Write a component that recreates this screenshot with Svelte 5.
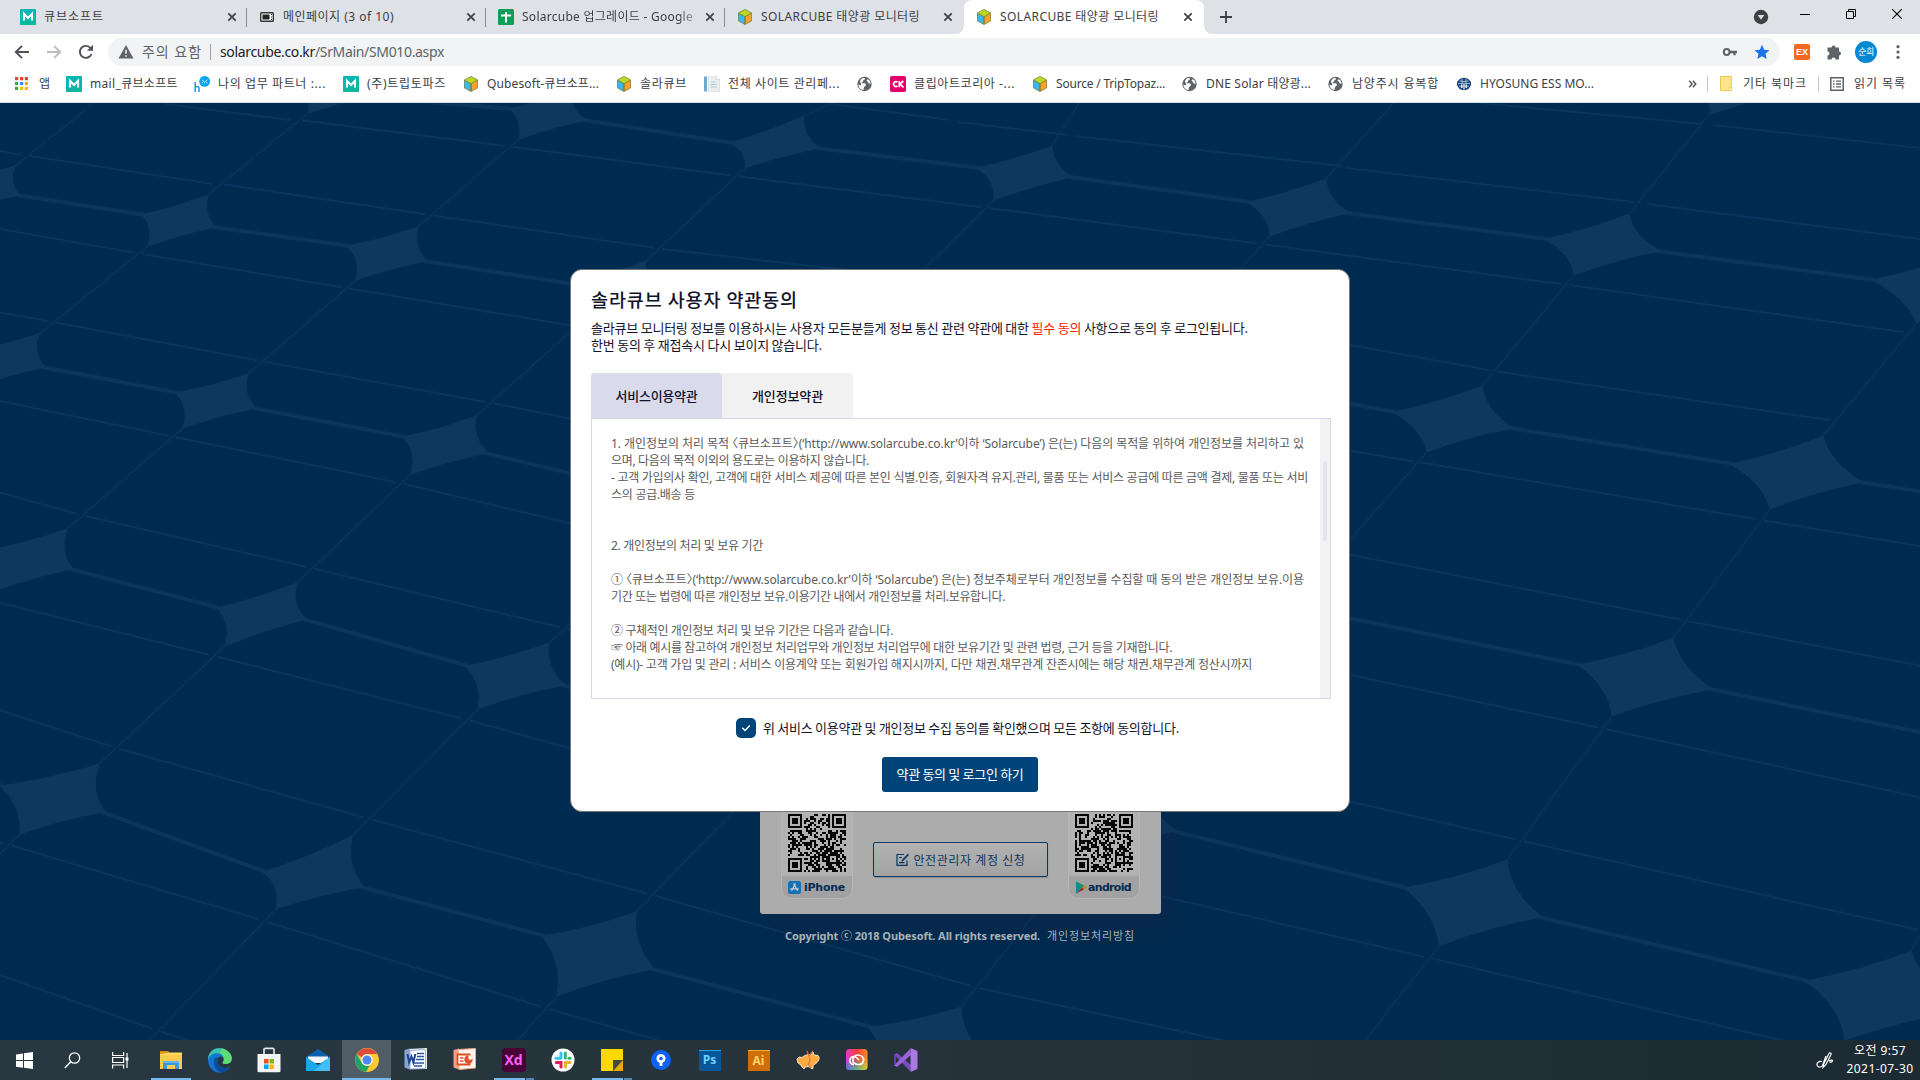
<script>
  // Tightens or loosens letter spacing so a single line fills a given width.
  function fit(node, width) {
    const natural = node.getBoundingClientRect().width;
    const count = [...node.textContent].length;
    if (width && count) node.style.letterSpacing = (width - natural) / count + 'px';
  }

  const tabs = [
    { icon: 'm', title: '큐브소프트', w: 60 },
    { icon: 'screen', title: '메인페이지 (3 of 10)', w: 111 },
    { icon: 'sheet', title: 'Solarcube 업그레이드 - Google', w: 171, fade: true },
    { icon: 'cube', title: 'SOLARCUBE 태양광 모니터링', w: 159 },
    { icon: 'cube', title: 'SOLARCUBE 태양광 모니터링', w: 159, active: true }
  ];

  const bookmarks = [
    { icon: 'm', title: 'mail_큐브소프트', w: 88 },
    { icon: 'hmail', title: '나의 업무 파트너 :...', w: 108 },
    { icon: 'm', title: '(주)트립토파즈', w: 79 },
    { icon: 'cube', title: 'Qubesoft-큐브소프...', w: 112 },
    { icon: 'cube', title: '솔라큐브', w: 47 },
    { icon: 'page', title: '전체 사이트 관리페...', w: 112 },
    { icon: 'globe', title: '', w: 0 },
    { icon: 'ck', title: '클립아트코리아 -...', w: 101 },
    { icon: 'cube', title: 'Source / TripTopaz...', w: 109 },
    { icon: 'globe', title: 'DNE Solar 태양광...', w: 105 },
    { icon: 'globe', title: '남양주시 융복합', w: 87 },
    { icon: 'hyosung', title: 'HYOSUNG ESS MO...', w: 114 }
  ];

  const terms = [
    ['1. 개인정보의 처리 목적 〈큐브소프트〉(‘http://www.solarcube.co.kr’이하 ‘Solarcube’) 은(는) 다음의 목적을 위하여 개인정보를 처리하고 있', 693],
    ['으며, 다음의 목적 이외의 용도로는 이용하지 않습니다.', 258],
    ['- 고객 가입의사 확인, 고객에 대한 서비스 제공에 따른 본인 식별.인증, 회원자격 유지.관리, 물품 또는 서비스 공급에 따른 금액 결제, 물품 또는 서비', 697],
    ['스의 공급.배송 등', 84],
    ['', 0],
    ['', 0],
    ['2. 개인정보의 처리 및 보유 기간', 152],
    ['', 0],
    ['① 〈큐브소프트〉(‘http://www.solarcube.co.kr’이하 ‘Solarcube’) 은(는) 정보주체로부터 개인정보를 수집할 때 동의 받은 개인정보 보유.이용', 693],
    ['기간 또는 법령에 따른 개인정보 보유.이용기간 내에서 개인정보를 처리.보유합니다.', 394],
    ['', 0],
    ['② 구체적인 개인정보 처리 및 보유 기간은 다음과 같습니다.', 282],
    ['☞ 아래 예시를 참고하여 개인정보 처리업무와 개인정보 처리업무에 대한 보유기간 및 관련 법령, 근거 등을 기재합니다.', 561],
    ['(예시)- 고객 가입 및 관리 : 서비스 이용계약 또는 회원가입 해지시까지, 다만 채권.채무관계 잔존시에는 해당 채권.채무관계 정산시까지', 641]
  ];

  const apps = [
    { icon: 'explorer', run: 1 }, { icon: 'edge' }, { icon: 'store' }, { icon: 'mail' },
    { icon: 'chrome', active: true }, { icon: 'word' }, { icon: 'ppt' }, { icon: 'xd', run: 2 },
    { icon: 'slack' }, { icon: 'notes', run: 2 }, { icon: 'sourcetree' }, { icon: 'ps' },
    { icon: 'ai' }, { icon: 'pig' }, { icon: 'cc' }, { icon: 'vs' }
  ];

  // Panel joints, row by row: left, top, right, bottom tips and the top tip of the joint below.
  const rows = [
    [
      [300, 92, 355, 78, 370, 97, 308, 113, 208, 195],
      [510, 109, 570, 90, 586, 120, 519, 139, 418, 227],
      [730, 143, 804, 116, 820, 148, 745, 168, 646, 261],
      [977, 168, 1052, 146, 1073, 177, 994, 200, 903, 290],
      [1247, 202, 1326, 179, 1350, 213, 1270, 236, 1185, 330],
      [1545, 239, 1629, 214, 1660, 251, 1574, 275, 1482, 386],
      [1872, 280, 1960, 254, 1995, 295, 1917, 323, 1823, 436]
    ],
    [
      [-55, 182, 15, 166, 20, 195, -45, 212, -150, 300],
      [142, 215, 208, 195, 216, 227, 148, 246, 39, 334],
      [347, 246, 418, 227, 427, 261, 356, 280, 248, 374],
      [570, 284, 646, 261, 658, 298, 586, 318, 476, 416],
      [815, 322, 903, 290, 922, 334, 840, 360, 735, 470],
      [1085, 362, 1185, 330, 1210, 378, 1110, 400, 1025, 525],
      [1393, 412, 1482, 386, 1513, 428, 1427, 452, 1325, 568],
      [1730, 464, 1823, 436, 1863, 482, 1770, 509, 1673, 638],
      [2110, 522, 2210, 490, 2250, 540, 2150, 570, 2040, 710]
    ],
    [
      [-35, 352, 39, 334, 45, 367, -25, 387, -140, 470],
      [176, 393, 248, 374, 256, 408, 183, 428, 67, 529],
      [403, 437, 476, 416, 488, 453, 411, 474, 297, 583],
      [650, 493, 735, 470, 750, 515, 668, 535, 549, 643],
      [930, 553, 1025, 525, 1045, 570, 952, 597, 835, 705],
      [1235, 600, 1325, 568, 1346, 617, 1250, 640, 1140, 775],
      [1578, 665, 1673, 638, 1713, 689, 1612, 716, 1507, 860],
      [1960, 741, 2060, 710, 2100, 765, 2000, 800, 1911, 951]
    ],
    [
      [-20, 552, 67, 529, 73, 569, -5, 591, -120, 690],
      [217, 608, 297, 583, 306, 619, 225, 646, 99, 764],
      [465, 666, 549, 643, 565, 685, 478, 709, 352, 836],
      [740, 735, 835, 705, 852, 755, 757, 787, 636, 912],
      [1050, 805, 1140, 775, 1176, 831, 1076, 862, 961, 1007],
      [1404, 888, 1507, 860, 1542, 917, 1439, 946, 1330, 1085],
      [1805, 981, 1911, 951, 1965, 1010, 1845, 1040, 1740, 1190]
    ],
    [
      [-250, 730, -160, 700, -150, 740, -240, 770, -380, 900],
      [0, 786, 99, 764, 105, 812, 20, 834, -110, 960],
      [263, 872, 352, 836, 364, 887, 276, 909, 140, 1050],
      [542, 936, 636, 912, 655, 969, 557, 996, 430, 1140],
      [868, 1027, 961, 1007, 990, 1060, 885, 1090, 770, 1230],
      [1220, 1120, 1330, 1085, 1360, 1150, 1250, 1170, 1130, 1320]
    ]
  ];

  // Point at fraction t of the diagonal that leaves a joint's bottom tip.
  const along = (s, t) => [s[6] + (s[8] - s[6]) * t + 3, s[7] + (s[9] - s[7]) * t];
  const q = (ax, ay, bx, by, cx, cy, k) => {
    const mx = (ax + bx) / 2, my = (ay + by) / 2;
    return `Q${mx + (cx - mx) * k} ${my + (cy - my) * k} ${bx} ${by}`;
  };
  const starPath = ([lx, ly, tx, ty, rx, ry, bx, by]) => {
    const cx = (lx + tx + rx + bx) / 4, cy = (ly + ty + ry + by) / 4;
    return `M${lx} ${ly}` + q(lx, ly, tx, ty, cx, cy, 0.16) + q(tx, ty, rx, ry, cx, cy, 0.28) +
      q(rx, ry, bx, by, cx, cy, 0.16) + q(bx, by, lx, ly, cx, cy, 0.28) + 'Z';
  };
  const links = [[375, 97, 513, 109]];
  const diagonals = [
    [98, 100, 15, 166], [840, 100, 804, 116], [1081, 100, 1052, 146],
    [1396, 100, 1326, 179], [1710, 113, 1629, 214]
  ];
  const seams = [
    [0, 151, 22, 155], [30, 156, 213, 184], [165, 104, 290, 120], [830, 104, 950, 120],
    [958, 122, 1068, 135], [1075, 136, 1342, 166], [1346, 168, 1634, 202],
    [1647, 204, 1920, 239], [1713, 125, 1920, 148], [1480, 103, 1702, 124]
  ];
  const seam = (a, b) => {
    const len = Math.hypot(b[0] - a[0], b[1] - a[1]);
    const t = (len - 8) / len;
    seams.push([a[0], a[1], a[0] + (b[0] - a[0]) * t, a[1] + (b[1] - a[1]) * t]);
  };
  for (const row of rows) {
    row.forEach((s, i) => {
      diagonals.push([s[6], s[7], s[8], s[9]]);
      const n = row[i + 1];
      if (!n) return;
      links.push([s[4] - 3, s[5], n[0] + 3, n[1]]);
      seam(along(s, 0.09), along(n, 0.09));
      seam(along(s, 0.87), along(n, 0.87));
    });
  }

  // Square matrix with three corner finders and a scattered data area.
  function matrix(seed) {
    const n = 29;
    let s = seed;
    const cells = [];
    const finder = (x, y) => {
      const d = Math.max(Math.abs(x - 3), Math.abs(y - 3));
      return d === 3 || d <= 1;
    };
    for (let y = 0; y < n; y++)
      for (let x = 0; x < n; x++) {
        s = (s * 1103515245 + 12345) % 2147483648;
        let on = (s >> 12) % 100 < 52;
        if (x < 8 && y < 8) on = x < 7 && y < 7 && finder(x, y);
        else if (x > 20 && y < 8) on = x > 21 && y < 7 && finder(x - 22, y);
        else if (x < 8 && y > 20) on = x < 7 && y > 21 && finder(x, y - 22);
        else if (x > 19 && x < 25 && y > 19 && y < 25) {
          const d = Math.max(Math.abs(x - 22), Math.abs(y - 22));
          on = d !== 1;
        }
        if (on) cells.push(`M${x} ${y}h1v1h-1z`);
      }
    return cells.join('');
  }
  const stores = [
    { name: 'iPhone', icon: 'appstore', w: 41, code: matrix(77) },
    { name: 'android', icon: 'play', w: 43, code: matrix(4211) }
  ];
</script>

{#snippet icon(name)}
  {#if name === 'm'}
    <svg class="i16" viewBox="0 0 16 16"><rect width="16" height="16" rx="1" fill="#0bb5b3" /><path d="M0 15L16 5v11H0z" fill="#12b886" opacity=".55" /><path d="M4 11.500V4.800l4 4.200 4-4.200v6.700" fill="none" stroke="#fff" stroke-width="2.100" /></svg>
  {:else if name === 'screen'}
    <svg class="i16" viewBox="0 0 16 16"><rect x="1.700" y="3.700" width="12.600" height="8.600" rx=".8" fill="#fff" stroke="#333" stroke-width="1.400" /><rect x="3.500" y="5.500" width="7" height="5" fill="#222" /><path d="M12 5.500h1M12 8h1M12 10.300h1" stroke="#222" /></svg>
  {:else if name === 'sheet'}
    <svg class="i16" viewBox="0 0 16 16"><rect width="16" height="16" rx="1.500" fill="#0f9d58" /><path d="M8 3v10.500M3 6.500h10" stroke="#fff" stroke-width="2" /></svg>
  {:else if name === 'cube'}
    <svg class="i16" viewBox="0 0 16 16"><path d="M8 0l7 3.700v8.400L8 16l-7-3.900V3.700z" fill="#7a8b3a" /><path d="M8 .8l6 3.200-6 3.200L2 4z" fill="#bfd526" /><path d="M1.600 4.700l5.900 3.200v7L1.600 11.600z" fill="#39b9ea" /><path d="M14.400 4.700L8.500 7.900v7l5.900-3.300z" fill="#f9a12e" /><path d="M8 7.600V15" stroke="#806b40" stroke-width=".8" /></svg>
  {:else if name === 'hmail'}
    <svg class="i16" viewBox="0 0 16 16"><circle cx="10.600" cy="5.400" r="5.400" fill="#03a5ee" /><path d="M7.800 3.600l2.800 2.500 2.800-2.500M7.800 7.300l1.600-1.400M13.400 7.300l-1.600-1.400" fill="none" stroke="#d5f1fd" stroke-width=".9" /><path d="M1.200 6v10M1.200 12.300c0-2 3.800-2.600 3.800 0V16" fill="none" stroke="#1a9de0" stroke-width="1.500" /></svg>
  {:else if name === 'page'}
    <svg class="i16" viewBox="0 0 16 16"><path d="M0 .5h3v15H0z" fill="#6ea8cf" /><path d="M4.500 0h7.500l3.500 3v13h-11z" fill="#eceff1" stroke="#d3d8dc" stroke-width=".7" /><path d="M7 6h5M7 8.500h6M7 11h6" stroke="#b6c6d1" /><path d="M12 0v3.500h3.500" fill="#fafafa" stroke="#c4c8cb" stroke-width=".6" /></svg>
  {:else if name === 'globe'}
    <svg class="i16" viewBox="0 0 16 16"><circle cx="7.500" cy="8" r="7.200" fill="#5f6368" /><path d="M6.300 1.800c2.500.2 2 1.600.5 2.200-1.200.5-.2 1.700-1.600 2.200-1 .4-.6 1.200.8 1.100 2-.2 3.200.4 2.900 1.800-.3 1.200-1.700 1-1.900 2.500l-.6 2.500C3.500 13.800 1.500 11.500 1.400 8.400L4.100 9.500C4.800 7.600 3 6.500 3 5.200 3.700 3.400 4.900 2.200 6.300 1.800zM10.800 3.200c-1.400.7-1.600 1.800-.4 2.300 1.400.5.200 1.800 2.300 2.200 1.100.2.900-.8.800-1.300-.4-1.500-1.300-2.600-2.700-3.200z" fill="#fff" /></svg>
  {:else if name === 'ck'}
    <svg class="i16" viewBox="0 0 16 16"><rect width="16" height="16" rx="1.800" fill="#e5006d" /><path d="M7.500 6.200A2.400 2.400 0 1 0 7.500 9.900M9.300 5v6.200M13.400 5L10 8.100l3.600 3.200" fill="none" stroke="#fff" stroke-width="1.700" /></svg>
  {:else if name === 'hyosung'}
    <svg class="i16" viewBox="0 0 16 16"><ellipse cx="8" cy="8" rx="7" ry="6.200" fill="#1c4678" /><path d="M2 7.600h12M3.500 4.800c3 1 6 1 9 0M3 10.300h10M6 2.700v5M10 2.700v5" stroke="#a9c5df" stroke-width=".9" fill="none" /><path d="M5 8.500h1.500v3.500H5zM9.500 8.500H11V12H9.500zM7.400 8h1.200v5.500H7.400z" fill="#e9f1f8" /></svg>
  {:else if name === 'appstore'}
    <svg class="i13" viewBox="0 0 13 13"><rect width="13" height="13" rx="2.500" fill="#1272b4" /><path d="M7.500 2.500L3.500 9.800M5.600 2.500l4 7.300M2.200 7.900h8.600" stroke="#c5ced4" stroke-width="1.300" fill="none" /></svg>
  {:else if name === 'play'}
    <svg class="i13" viewBox="0 0 13 13"><path d="M1 .3v12.400l6-6.200z" fill="#128a91" /><path d="M1 .3l8 4.200-2 2z" fill="#16905a" /><path d="M9 4.500l3.300 2L9 8.500l-2-2z" fill="#b0921d" /><path d="M1 12.700l6-6.200 2 2z" fill="#a52d35" /></svg>
  {:else if name === 'explorer'}
    <svg class="i26" viewBox="0 0 26 26"><path d="M2 4h8l2 2v3H2z" fill="#d9930e" /><path d="M2 7l10-1.500h12V21H2z" fill="#ffd768" /><path d="M2 8h22v14H2z" fill="#fbcb4e" /><path d="M5 14h16v8h-4v-4H9v4H5z" fill="#3a98dc" /><path d="M5 14h16v2H5z" fill="#5eb5ef" /></svg>
  {:else if name === 'edge'}
    <svg class="i26" viewBox="0 0 24 24"><path d="M1 13C0 4 8-1 15 1.500 22 4 25 10 21.500 14c-2 2-6 2-7 .8-.8-1 1.300-1.300.8-4C14.500 7 8 4.500 1 13z" fill="#37c2b3" /><path d="M14 1.200C21 3 25 10 21.500 14c-2 2-6 2-7 .8 2.500-3 1.500-7-3-9z" fill="#5bdd74" /><path d="M1 12C3 5 12 4 15 9c-5-1-6 3-5 6 1.200 4 6 6 11 3.200C18 24 9 26 4 20c-2-2-3-5-3-8z" fill="#1275cf" /><path d="M7.500 10c-3 5 0 12 5.500 13.500 3.300.2 6.500-2.300 8-5.300-5 2.500-10 .5-11-3.500-.5-2-.5-3.500 1-5z" fill="#0b4c9a" /></svg>
  {:else if name === 'store'}
    <svg class="i26" viewBox="0 0 26 26"><path d="M8 9V2.500c0-.8.500-1.200 1.200-1.200h7.600c.7 0 1.200.4 1.200 1.200V9" fill="none" stroke="#dfe3e5" stroke-width="1.700" /><path d="M1.500 7h23v17c0 .8-.5 1.200-1.200 1.200H2.700c-.7 0-1.200-.4-1.200-1.200z" fill="#f4f4f4" /><path d="M8 12h4.500v4.500H8z" fill="#f25022" /><path d="M13.500 12H18v4.500h-4.500z" fill="#7fba00" /><path d="M8 17.500h4.500V22H8z" fill="#00a4ef" /><path d="M13.500 17.500H18V22h-4.500z" fill="#ffb900" /></svg>
  {:else if name === 'mail'}
    <svg class="i26" viewBox="0 0 26 26"><path d="M1 10L13 2l12 8v4H1z" fill="#0b62b0" /><path d="M3 9.500h20V16H3z" fill="#f5f9fc" /><path d="M1 10l12 8 12-8v14H1z" fill="#1ba7ec" /><path d="M25 10v14H9z" fill="#4cc6f7" opacity=".8" /></svg>
  {:else if name === 'chrome'}
    <svg class="i26" viewBox="0 0 24 24"><circle cx="12" cy="12" r="11" fill="#fcc934" /><path d="M2.500 6.500A11 11 0 0 1 21.500 6.500H12a5.500 5.500 0 0 0-5 3z" fill="#dd4b3e" /><path d="M2.500 6.500l5 8.500c1.500 2.500 4.500 3 7 2L11 23A11 11 0 0 1 2.500 6.500z" fill="#1fa463" /><circle cx="12" cy="12" r="5.300" fill="#fff" /><circle cx="12" cy="12" r="4.200" fill="#4a87ee" /></svg>
  {:else if name === 'word'}
    <svg class="i26" viewBox="0 0 26 26"><path d="M5 2l19-1v21H7z" fill="#eef2f8" /><path d="M1.500 3L7 1.500v21l-5.500-2z" fill="#8aa6d6" /><path d="M7 3.500L22.500 2.500v19L7 22z" fill="#fff" stroke="#9db2da" /><path d="M4.500 7l1.600 8.500 2.300-6 2 6L12.300 7" stroke="#1f4596" stroke-width="2" fill="none" /><path d="M14 6.500h7M14 9.500h7M13 12.500h8M11 16h10M11 19h8" stroke="#2b57a8" stroke-width="1.400" /></svg>
  {:else if name === 'ppt'}
    <svg class="i26" viewBox="0 0 26 26"><path d="M1.500 3L7 1.500v21l-5.500-2z" fill="#f0a083" /><path d="M6 2.500l17.500-1V21L7 22.500z" fill="#fff3ec" stroke="#eea78e" /><path d="M5.500 7.500h12v10h-12z" fill="#fff" stroke="#de4f20" stroke-width="1.800" /><circle cx="16.500" cy="12.500" r="4.200" fill="#e0522a" /><path d="M16.500 12.500V8.300a4.200 4.200 0 0 1 4.200 4.200z" fill="#fff" /><path d="M8 11h3.500M8 14h3.500" stroke="#de4f20" stroke-width="1.500" /></svg>
  {:else if name === 'slack'}
    <svg class="i26" viewBox="0 0 26 26"><circle cx="13" cy="13" r="11.500" fill="#fff" /><g stroke-width="3" stroke-linecap="round"><path d="M11 6v5" stroke="#36c5f0" /><path d="M6 11.300h4" stroke="#36c5f0" /><path d="M15.300 6v5" stroke="#2eb67d" /><path d="M20 11.300h-1" stroke="#2eb67d" /><path d="M15.500 20v-4.500h4.500" stroke="#ecb22e" fill="none" /><path d="M11 20v-4.500H6.300" stroke="#e01e5a" fill="none" /></g></svg>
  {:else if name === 'notes'}
    <svg class="i26" viewBox="0 0 26 26"><path d="M2 2h22v12L14 24H2z" fill="#ffd800" /><path d="M24 13v11H14z" fill="#e9a900" /><path d="M14 13h10L14 24z" fill="#444548" /></svg>
  {:else if name === 'sourcetree'}
    <svg class="i26" viewBox="0 0 26 26"><circle cx="13" cy="13" r="10" fill="#0e62f5" /><circle cx="13" cy="11.500" r="3.200" fill="none" stroke="#fff" stroke-width="2.700" /><path d="M13 14.500v4.500" stroke="#fff" stroke-width="2.800" /></svg>
  {:else if name === 'pig'}
    <svg class="i26" viewBox="0 0 26 26"><path d="M2 12l2-2 3 .5c3-3 7-3 9-2.500l2-3 1 3 4 .5c2 2 1 5-1 7l-4 3v3h-2l-2-2-4 .5-1 2-2-2-1-2-3-2z" fill="#ffab43" stroke="#ffe1c4" stroke-width="1" /><path d="M12 4l2 5 4-5M14 10c2 3 1 5-1 7l3 4" fill="none" stroke="#e2763c" stroke-width="1.200" /></svg>
  {:else if name === 'cc'}
    <svg class="i26" viewBox="0 0 26 26"><defs><linearGradient id="ccA" x1="0" y1="0" x2="1" y2="0"><stop offset="0" stop-color="#e63ad0" /><stop offset=".5" stop-color="#f23c3c" /><stop offset="1" stop-color="#fb8b24" /></linearGradient><linearGradient id="ccB" x1="0" y1="0" x2="1" y2="0"><stop offset="0" stop-color="#2f7df6" /><stop offset=".5" stop-color="#3ad4a1" /><stop offset="1" stop-color="#d5e52d" /></linearGradient><linearGradient id="ccC" x1="0" y1="0" x2="0" y2="1"><stop offset=".35" stop-color="#fff" stop-opacity="0" /><stop offset="1" stop-color="#fff" /></linearGradient><mask id="ccM"><rect width="26" height="26" fill="url(#ccC)" /></mask></defs><rect x="2" y="2" width="21.500" height="21" rx="3.500" fill="url(#ccA)" /><rect x="2" y="2" width="21.500" height="21" rx="3.500" fill="url(#ccB)" mask="url(#ccM)" /><path d="M10 17.500a4 4 0 1 1 1-7.800c1.500.5 2.500 1.500 4 3.300M9.500 14.500c-2-3 1-7 5-6.500 3.500.3 5.500 3 5 5.500-.5 3-3 4.300-6 4-3-.2-3.500-1.500-5-3" fill="none" stroke="#fff" stroke-width="1.600" /></svg>
  {:else if name === 'vs'}
    <svg class="i26" viewBox="0 0 26 26"><path d="M1 7.500L4 6l14 12-1 6z" fill="#7b4bbd" /><path d="M1 18.500L4 20 18 8l-1-6z" fill="#9a63d8" /><path d="M1 7.500v11l2-1.500V9z" fill="#6a3aa8" /><path d="M17.500 1L24.500 4v18l-7 3z" fill="#a979e0" /></svg>
  {/if}
{/snippet}

{#snippet cross()}
  <svg class="cross" viewBox="0 0 10 10"><path d="M1.300 1.300l7.400 7.400M8.700 1.300L1.300 8.700" stroke="#3c4043" stroke-width="1.700" /></svg>
{/snippet}

<div class="desktop">
  <header class="strip">
    <div class="tabs">
      {#each tabs as tab, i}
        <div class="tab" class:active={tab.active} class:ruled={i < 3}>
          {@render icon(tab.icon)}
          <span class="title" class:fade={tab.fade}><span class="line" use:fit={tab.w}>{tab.title}</span></span>
          {@render cross()}
        </div>
      {/each}
    </div>
    <svg class="plus" viewBox="0 0 12 12"><path d="M6 0v12M0 6h12" stroke="#3c4043" stroke-width="1.800" /></svg>
    <div class="window">
      <svg class="down" viewBox="0 0 16 16"><circle cx="8" cy="8" r="7.200" fill="#3c4043" /><path d="M4.700 6h6.600L8 10.700z" fill="#dee1e6" /></svg>
      <svg viewBox="0 0 10 10"><path d="M0 5.500h10" stroke="#000" /></svg>
      <svg viewBox="0 0 10 10"><path d="M.5 2.500h7v7h-7zM2.500 2.500v-2h7v7h-2" fill="none" stroke="#000" /></svg>
      <svg viewBox="0 0 10 10"><path d="M0 0l10 10M10 0L0 10" stroke="#000" stroke-width="1.100" /></svg>
    </div>
  </header>

  <div class="toolbar">
    <div class="nav">
      <svg viewBox="0 0 16 16"><path d="M15 8H2M8 1.800L1.800 8 8 14.200" fill="none" stroke="#4d5156" stroke-width="1.900" /></svg>
      <svg viewBox="0 0 16 16"><path d="M1 8h13M8 1.800L14.200 8 8 14.200" fill="none" stroke="#babcbe" stroke-width="1.900" /></svg>
      <svg viewBox="0 0 16 16"><path d="M13.500 10A6 6 0 1 1 12.500 4L14 5.500" fill="none" stroke="#4d5156" stroke-width="1.900" /><path d="M15 .8v6H9z" fill="#4d5156" /></svg>
    </div>
    <div class="omnibox">
      <svg class="warn" viewBox="0 0 16 16"><path d="M8 1l7.500 13.500H.5z" fill="#5f6368" /><path d="M8 5.800v4M8 11.200v1.600" stroke="#f1f3f4" stroke-width="1.500" /></svg>
      <span class="line insecure" use:fit={60}>주의 요함</span>
      <i></i>
      <span class="line url" use:fit={224}><b>solarcube.co.kr</b>/SrMain/SM010.aspx</span>
      <div class="marks">
        <svg viewBox="0 0 16 16"><circle cx="4.700" cy="8" r="2.900" fill="none" stroke="#5f6368" stroke-width="2" /><path d="M7.500 8H15M12.500 8v3.300" stroke="#5f6368" stroke-width="2.300" /></svg>
        <svg viewBox="0 0 16 16"><path d="M8 .8l2.200 4.900 5.300.5-4 3.500 1.200 5.300L8 12.200 3.300 15l1.200-5.300-4-3.500 5.300-.5z" fill="#1a73e8" /></svg>
      </div>
    </div>
    <div class="extensions">
      <span class="ex">EX</span>
      <svg viewBox="0 0 16 16"><path d="M5.500 3.500a2 2 0 1 1 4 0h3.500v4a2 2 0 1 1 0 4v4h-3.500a2 2 0 1 0-4 0H1.500v-4a2 2 0 1 0 0-4v-4z" fill="#5f6368" /></svg>
      <span class="avatar">순희</span>
      <svg viewBox="0 0 16 16"><g fill="#5f6368"><circle cx="8" cy="2.700" r="1.600" /><circle cx="8" cy="8" r="1.600" /><circle cx="8" cy="13.300" r="1.600" /></g></svg>
    </div>
  </div>

  <nav class="bookmarks">
    <div class="apps-link">
      <svg viewBox="0 0 13 13"><path d="M0 0h3.200v3.200H0zM5 0h3.200v3.200H5zM9.800 0H13v3.200H9.800z" fill="#ea4335" /><path d="M0 4.900h3.200v3.200H0z" fill="#34a853" /><path d="M5 4.900h3.200v3.200H5z" fill="#4285f4" /><path d="M9.800 4.900H13v3.200H9.800z" fill="#f5a623" /><path d="M0 9.800h3.200V13H0z" fill="#34a853" /><path d="M5 9.800h3.200V13H5zM9.800 9.800H13V13H9.800z" fill="#fbbc05" /></svg>
      <span class="line" use:fit={11}>앱</span>
    </div>
    {#each bookmarks as mark}
      <div class="bookmark">
        {@render icon(mark.icon)}
        {#if mark.title}<span class="line" use:fit={mark.w}>{mark.title}</span>{/if}
      </div>
    {/each}
    <div class="more">
      <svg class="chev" viewBox="0 0 8 8"><path d="M.7.8L3.700 4 .7 7.200M4.300.8L7.300 4l-3 3.200" fill="none" stroke="#4d5156" stroke-width="1.400" /></svg>
      <i></i>
      <svg class="folder" viewBox="0 0 12 15"><path d="M.5.5h11v14H.5z" fill="#ffe48c" stroke="#ecc94f" /><path d="M9 11.500h2.500v3H9z" fill="#fff3c5" stroke="#ecc94f" stroke-width=".7" /></svg>
      <span class="line" use:fit={64}>기타 북마크</span>
      <i class="second"></i>
      <svg class="list" viewBox="0 0 14 14"><path d="M.8.8h12.400v12.400H.8z" fill="none" stroke="#5f6368" stroke-width="1.500" /><path d="M3 4.200h1.500M6 4.200h5M3 7h1.500M6 7h5M3 9.800h1.500M6 9.800h5" stroke="#5f6368" stroke-width="1.300" /></svg>
      <span class="line" use:fit={52}>읽기 목록</span>
    </div>
  </nav>

  <main class="page">
    <svg class="panels" viewBox="0 103 1920 937">
      <g class="seams">
        {#each seams as [a, b, c, d]}<line x1={a} y1={b} x2={c} y2={d} />{/each}
      </g>
      <g class="diagonals">
        {#each diagonals as [a, b, c, d]}<line x1={a} y1={b} x2={c} y2={d} />{/each}
      </g>
      <g class="links">
        {#each links as [a, b, c, d]}<line x1={a} y1={b} x2={c} y2={d} />{/each}
      </g>
      {#each rows as row}
        {#each row as star}<path class="star" d={starPath(star)} />{/each}
      {/each}
      <path class="star" d="M1702 90Q1712 104 1710 114Q1726 110 1745 103L1750 90Z" />
    </svg>

    <div class="login">
      <div class="login-card">
        {#each stores as store, i}
          <div class="store" class:last={i === 1}>
            <div class="code">
              <svg viewBox="0 0 29 29" shape-rendering="crispEdges"><path d={store.code} fill="#060606" /></svg>
            </div>
            <div class="label">
              {@render icon(store.icon)}
              <span class="line" use:fit={store.w}>{store.name}</span>
            </div>
          </div>
        {/each}
        <button class="apply">
          <svg viewBox="0 0 13 13"><path d="M8 1.500H1v10.800h10V7.500M3 4.500h3M3 9.700h5.500" fill="none" stroke="#0b3761" stroke-width="1.200" /><path d="M11.800.8L6 6.700l-.8 2 2-.8L13 2z" fill="#0b3761" /></svg>
          <span class="line" use:fit={112}>안전관리자 계정 신청</span>
        </button>
      </div>
      <footer>
        <b class="line" use:fit={255}>Copyright ⓒ 2018 Qubesoft. All rights reserved.</b>
        <span class="line" use:fit={88}>개인정보처리방침</span>
      </footer>
    </div>

    <section class="dialog">
      <h1><span class="line" use:fit={207}>솔라큐브 사용자 약관동의</span></h1>
      <p><span class="line" use:fit={657}>솔라큐브 모니터링 정보를 이용하시는 사용자 모든분들게 정보 통신 관련 약관에 대한 <em>필수 동의</em> 사항으로 동의 후 로그인됩니다.</span></p>
      <p><span class="line" use:fit={231}>한번 동의 후 재접속시 다시 보이지 않습니다.</span></p>
      <div class="choices">
        <button class="current"><span class="line" use:fit={82}>서비스이용약관</span></button>
        <button><span class="line" use:fit={71}>개인정보약관</span></button>
      </div>
      <div class="terms">
        <div class="copy">
          {#each terms as [text, w]}
            <p><span class="line" use:fit={w}>{text}</span></p>
          {/each}
        </div>
        <div class="track"><div class="thumb"></div></div>
      </div>
      <div class="agree">
        <span class="box"><svg viewBox="0 0 20 20"><path d="M6.300 9.800l2.700 2.700 4.800-5" fill="none" stroke="#fff" stroke-width="1.400" /></svg></span>
        <span class="line" use:fit={416}>위 서비스 이용약관 및 개인정보 수집 동의를 확인했으며 모든 조항에 동의합니다.</span>
      </div>
      <button class="submit"><span class="line" use:fit={127}>약관 동의 및 로그인 하기</span></button>
    </section>
  </main>

  <div class="taskbar">
    <div class="sys"><svg viewBox="0 0 17 17"><path d="M0 2.500l7-1v6.600H0zM8 1.300L17 0v8.100H8zM0 9.100h7v6.600l-7-1zM8 9.100h9V17l-9-1.300z" fill="#fff" /></svg></div>
    <div class="sys"><svg viewBox="0 0 17 17"><circle cx="10.500" cy="6" r="5.200" fill="none" stroke="#fff" stroke-width="1.300" /><path d="M6.800 9.800L.8 16" stroke="#fff" stroke-width="1.400" /></svg></div>
    <div class="sys"><svg viewBox="0 0 17 17"><path d="M.6 0v3.500h11V0M.6 16.500V13h11v3.500M.6 5.500h11v5H.6zM15 1v15" fill="none" stroke="#fff" stroke-width="1.200" /><path d="M13.500 5.500h3v3h-3z" fill="#fff" /></svg></div>
    <div class="running">
      {#each apps as app}
        <div class="app" class:on={app.active}>
          {#if app.icon === 'xd'}<span class="adobe xd">Xd</span>
          {:else if app.icon === 'ps'}<span class="adobe ps">Ps</span>
          {:else if app.icon === 'ai'}<span class="adobe ai">Ai</span>
          {:else}{@render icon(app.icon)}{/if}
          {#if app.run}<div class="bar" class:many={app.run === 2}></div>{/if}
        </div>
      {/each}
    </div>
    <svg class="pen" viewBox="0 0 18 18"><path d="M7.500 13.500L13 2.500c.6-1.300 2.600-.5 2 1L10 13.500l-3 3zM6 10.500c-4-.5-6 2-4.500 4.500 1 1.500 3.500 1.500 5-.5L10 5M13 10c2-1.500 4-1 3.500 0s-2 1.500-3 1" fill="none" stroke="#fff" stroke-width="1.200" /></svg>
    <div class="clock">
      <span class="line" use:fit={52}>오전 9:57</span>
      <span class="line" use:fit={67}>2021-07-30</span>
    </div>
  </div>
</div>

<style>
  :global(body) { margin: 0; overflow: hidden; }
  .desktop {
    width: 1920px; height: 1080px; display: flex; flex-direction: column; overflow: hidden;
    font-family: 'Noto Sans', 'Noto Sans CJK KR', sans-serif; font-size: 12px; color: #3c4043; background: #fff;
  }
  .desktop *, .desktop { box-sizing: border-box; }
  svg { display: block; flex: none; }
  button { font: inherit; color: inherit; padding: 0; border: 0; display: flex; align-items: center; justify-content: center; }
  p, h1 { margin: 0; }
  .line { display: inline-block; white-space: pre; flex: none; }
  .i16 { width: 16px; height: 16px; }
  .i13 { width: 13px; height: 13px; }
  .i26 { width: 26px; height: 26px; }

  .strip { height: 34px; flex: none; background: #dee1e6; display: flex; }
  .tabs { display: flex; padding-left: 8px; }
  .tab { position: relative; width: 239px; height: 34px; display: flex; align-items: center; padding: 0 10px 0 12px; }
  .tab:nth-child(n + 4) { padding-right: 11px; }
  .title { flex: 1; overflow: hidden; margin-left: 8px; line-height: 20px; height: 20px; }
  .title.fade { mask-image: linear-gradient(90deg, #000 85%, transparent); }
  .cross { width: 10px; height: 10px; }
  .ruled::after { content: ''; position: absolute; right: 0; top: 8px; width: 1px; height: 19px; background: #8b8f95; }
  .active { background: #fff; border-radius: 8px 8px 0 0; width: 240px; }
  .active::before, .active::after { content: ''; position: absolute; bottom: 0; width: 8px; height: 8px; }
  .active::before { left: -8px; background: radial-gradient(circle at 0 0, transparent 7.500px, #fff 8px); }
  .active::after { right: -8px; background: radial-gradient(circle at 100% 0, transparent 7.500px, #fff 8px); }
  .plus { width: 12px; height: 12px; margin: 11px 0 0 16px; }
  .window { margin-left: auto; display: flex; gap: 36px; padding: 9px 18px 0 0; }
  .window svg { width: 10px; height: 10px; }
  .window .down { width: 16px; height: 16px; margin-right: -5px; }

  .toolbar { height: 36px; flex: none; display: flex; align-items: center; padding: 0 14px; }
  .nav { display: flex; gap: 16px; }
  .nav svg { width: 16px; height: 16px; }
  .omnibox { width: 1672px; height: 28px; margin-left: 14px; border-radius: 14px; background: #f1f3f4; display: flex; align-items: center; padding: 0 10px; font-size: 14px; }
  .omnibox .line { padding-bottom: 2px; }
  .warn { width: 16px; height: 16px; margin-right: 8px; }
  .insecure { color: #5f6368; }
  .omnibox i { width: 1px; height: 16px; background: #9aa0a6; margin: 0 9px 0 8px; }
  .url { color: #5f6368; }
  .url b { font-weight: 400; color: #202124; }
  .marks { margin-left: auto; display: flex; gap: 16px; }
  .marks svg, .extensions svg { width: 16px; height: 16px; }
  .extensions { display: flex; align-items: center; margin-left: 14px; }
  .ex { width: 16px; height: 16px; background: #f26a21; border-radius: 2px; color: #fff; font: bold 9px/16px 'Liberation Sans', sans-serif; text-align: center; margin-right: 16px; }
  .avatar { width: 22px; height: 22px; border-radius: 50%; background: #0288d1; color: #fff; font-size: 9px; line-height: 21px; text-align: center; margin: 0 10px 0 13px; letter-spacing: -0.500px; white-space: nowrap; }
  .extensions svg:last-child { margin-left: 3px; }

  .bookmarks { height: 33px; flex: none; display: flex; align-items: center; padding: 0 14px 5px 15px; border-bottom: 1px solid #d9dce0; line-height: 18px; }
  .apps-link { display: flex; align-items: center; gap: 11px; width: 51px; }
  .apps-link svg { width: 13px; height: 13px; }
  .bookmark { display: flex; align-items: center; gap: 8px; margin-right: 17px; }
  .bookmark:nth-child(2) { margin-right: 16px; }
  .more { margin-left: auto; display: flex; align-items: center; }
  .more i { width: 1px; height: 16px; background: #c7cacd; margin: 0 12px 0 10px; }
  .more .second { margin: 0 11px; }
  .chev { width: 9px; height: 8px; }
  .folder { width: 12px; height: 15px; margin-right: 11px; }
  .list { width: 14px; height: 14px; margin-right: 10px; }

  .page { position: relative; height: 937px; flex: none; background: #002b50; overflow: hidden; display: flex; justify-content: center; align-items: flex-end; }
  .panels { position: absolute; inset: 0; width: 1920px; height: 937px; }
  .panels .seams { stroke: #07365f; stroke-width: 2.200; }
  .panels .diagonals { stroke: #07345c; stroke-width: 1.800; }
  .panels .links { stroke: #0a365e; stroke-width: 4; }
  .star { fill: #0d395f; stroke: #0d395f; stroke-width: 1; }

  .login { position: relative; width: 401px; height: 240px; margin: 0 0 0 1px; }
  .login-card { height: 114px; background: #acacac; border-radius: 0 0 3px 3px; display: flex; justify-content: space-between; padding: 0 21px; box-shadow: 12px 14px 24px rgba(22, 38, 70, 0.450); }
  .store { width: 72px; height: 99px; border: 1px solid #b7b7b7; border-radius: 10px; background: #aeaeae; overflow: hidden; }
  .store.last { order: 3; }
  .code { height: 75px; background: #b2b2b2; padding: 13px 6px 0; }
  .code svg { width: 58px; height: 58px; }
  .label { height: 23px; background: #a2a2a2; display: flex; align-items: center; gap: 3px; padding-left: 6px; color: #042c52; font: bold 11px/14px 'DejaVu Sans', sans-serif; }
  .last .label { gap: 0; }
  .apply { order: 2; width: 175px; height: 35px; margin-top: 42px; border: 1px solid #053763; border-radius: 2px; background: linear-gradient(#b2b2b2, #a3a3a3); color: #0b3761; gap: 5px; box-shadow: 0 1px 1px #8b9299; }
  .apply svg { width: 13px; height: 13px; }
  footer { display: flex; align-items: center; gap: 7px; padding-left: 25px; margin-top: 14px; color: #a9b1b5; font-size: 11px; line-height: 16px; }

  .dialog { position: absolute; left: 570px; top: 166px; width: 780px; height: 543px; background: #fff; border: 1px solid #767676; border-radius: 12px; padding: 16px 18px 0 20px; color: #12122a; font-family: 'Noto Sans CJK KR', sans-serif; display: flex; flex-direction: column; }
  h1 { font-size: 18.500px; font-weight: 500; line-height: 26px; height: 33px; }
  .dialog > p { font-size: 13px; line-height: 17px; height: 17px; }
  em { font-style: normal; color: #ff1c00; }
  .choices { display: flex; margin-top: 20px; font-size: 13px; font-weight: 500; }
  .choices button { width: 131px; height: 45px; background: #f1f1f2; border-radius: 3px 3px 0 0; }
  .choices .current { background: #d9dbec; }
  .terms { width: 740px; height: 281px; flex: none; border: 1px solid #d5d7e9; display: flex; justify-content: space-between; }
  .copy { padding: 16px 0 0 19px; font-family: 'Noto Sans', 'Noto Sans CJK KR', sans-serif; font-feature-settings: 'halt'; font-size: 12px; line-height: 17px; color: #5a5a5a; }
  .copy p { height: 17px; }
  .track { width: 10px; background: #f3f3f5; padding: 42px 3px 0; }
  .thumb { width: 4px; height: 80px; border-radius: 2px; background: #e2e4f2; }
  .agree { display: flex; align-items: center; gap: 7px; margin: 19px 0 0 145px; height: 20px; font-size: 13px; }
  .agree .line, .submit .line { padding-bottom: 2px; }
  .box { width: 20px; height: 20px; border-radius: 5px; background: #00447a; }
  .submit { width: 156px; height: 35px; margin: 19px 0 0 291px; border-radius: 3px; background: #00447a; color: #fff; font-size: 13px; }

  .taskbar { height: 40px; flex: none; display: flex; background: linear-gradient(90deg, #283840, #26323a 50%, #1c2b33); color: #fff; }
  .sys { width: 48px; height: 40px; display: grid; place-items: center; }
  .sys svg { width: 17px; height: 17px; }
  .running { display: flex; margin-left: 2px; }
  .app { position: relative; width: 49px; height: 40px; display: grid; place-items: center; }
  .on { background: #505d66; box-shadow: inset 0 -2px #76b9ed; }
  .bar { position: absolute; bottom: 0; left: 5px; width: 40px; height: 2px; background: #76b9ed; }
  .bar.many { background: linear-gradient(90deg, #76b9ed 31px, #26323a 31px, #26323a 32px, #5587b1 32px); }
  .adobe { width: 22px; height: 21px; text-align: center; font: bold 12px/21px 'Open Sans', sans-serif; }
  .xd { width: 24px; height: 24px; line-height: 23px; border-radius: 4px; background: #470137; color: #ff61f6; font-size: 14px; }
  .ps { background: #06579a; color: #6fd3ff; border-top: 1px solid #31a3e0; line-height: 18px; }
  .ai { background: #cf6d0a; color: #ffd36a; border-top: 1px solid #ffb037; line-height: 20px; }
  .pen { width: 18px; height: 18px; margin: 11px 0 0 auto; }
  .clock { width: 80px; margin: 2px 0 0 6px; padding-right: 0; display: flex; flex-direction: column; align-items: center; line-height: 18px; }
</style>
